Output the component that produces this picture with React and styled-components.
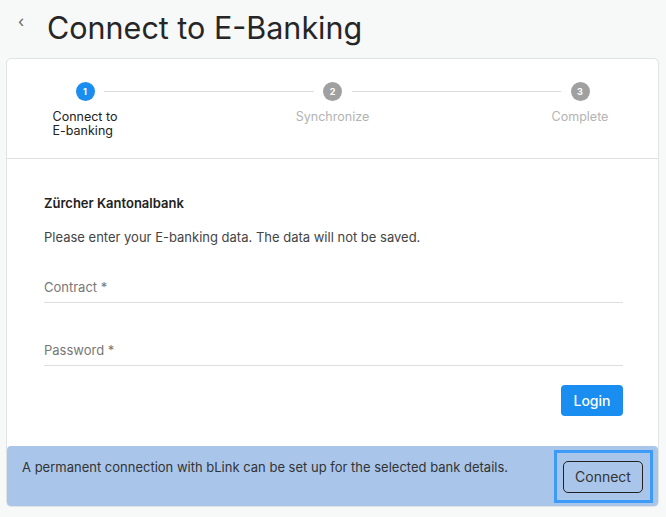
import React from 'react'
import styled, { createGlobalStyle } from 'styled-components'

const GlobalStyle = createGlobalStyle`
    body {
        margin: 0;
        background: #f7f8f8;
        font-family: Inter, "Noto Sans", sans-serif;
        color: #222;
    }
`;

const Page = styled.div`
    width: 666px;
    height: 517px;
    overflow: hidden;
`;

const Header = styled.div`
    height: 58px;
    display: flex;
    align-items: center;
    padding: 0 0 3px 18px;
    box-sizing: border-box;
`;

const BackButton = styled.span`
    font-size: 16px;
    color: #666;
    width: 29px;
    margin-top: -13px;
`;

const Title = styled.h1`
    margin: 0;
    font-size: 30.5px;
    font-weight: 400;
    color: #262626;
`;

const Card = styled.div`
    margin: 0 7px 0 6px;
    background: #fff;
    border: 1px solid #e1e2e2;
    border-radius: 5px;
`;

const Stepper = styled.div`
    display: flex;
    padding: 23px 38px 0;
    height: 100px;
    box-sizing: border-box;
    border-bottom: 1px solid #e0e0e0;
`;

const Step = styled.div`
    width: 80px;
    display: flex;
    flex-direction: column;
    align-items: center;
`;

const Circle = styled.div`
    width: 19px;
    height: 19px;
    border-radius: 50%;
    background: ${p => (p.$active ? '#1a8df0' : '#a0a0a0')};
    color: #fff;
    font-size: 9px;
    font-weight: 700;
    display: flex;
    align-items: center;
    justify-content: center;
`;

const StepLabel = styled.div`
    margin-top: 9px;
    width: fit-content;
    white-space: nowrap;
    font-size: 12.5px;
    line-height: 13.5px;
    color: ${p => (p.$active ? '#222' : '#b3b3b3')};
`;

const Connector = styled.div`
    flex: 1;
    height: 1px;
    background: #dcdcdc;
    margin: 9px -21px 0;
`;

const Form = styled.div`
    padding: 36px 35px 0 37px;
`;

const BankName = styled.div`
    font-size: 13px;
    font-weight: 600;
    line-height: 16px;
    color: #222;
`;

const Hint = styled.div`
    margin-top: 18px;
    font-size: 13px;
    line-height: 16px;
    color: #444;
`;

const Field = styled.div`
    margin-top: ${p => (p.$first ? '34px' : '39px')};
    padding: 0 0 7px 0;
    border-bottom: 1px solid #dedede;
    font-size: 13px;
    line-height: 16px;
    color: #777;
`;

const Actions = styled.div`
    display: flex;
    justify-content: flex-end;
    margin-top: 19px;
`;

const PrimaryButton = styled.button`
    width: 62px;
    height: 31px;
    border: none;
    border-radius: 4px;
    background: #1a8df0;
    color: #fff;
    font-family: inherit;
    font-size: 14px;
    font-weight: 500;
`;

const Banner = styled.div`
    margin-top: 30px;
    height: 60px;
    background: #a9c6ea;
    border-radius: 4px;
    display: flex;
    align-items: center;
    justify-content: space-between;
    padding: 0 5px 0 15px;
`;

const BannerText = styled.div`
    align-self: flex-start;
    padding-top: 13px;
    font-size: 13px;
    line-height: 16px;
    color: #333;
`;

const FocusRing = styled.div`
    border: 3px solid #3b9bf7;
    padding: 8px 7px 7px 6px;
`;

const OutlineButton = styled.button`
    display: block;
    width: 80px;
    height: 32px;
    border: 1px solid #222;
    border-radius: 5px;
    background: transparent;
    color: #333;
    font-family: inherit;
    font-size: 14px;
`;

const steps = [
    { n: 1, lines: ['Connect to', 'E-banking'], active: true },
    { n: 2, lines: ['Synchronize'] },
    { n: 3, lines: ['Complete'] },
];

function App() {
    return (
        <Page>
            <GlobalStyle />
            <Header>
                <BackButton>‹</BackButton>
                <Title>Connect to E-Banking</Title>
            </Header>
            <Card>
                <Stepper>
                    {steps.map((s, i) => (
                        <React.Fragment key={s.n}>
                            {i > 0 && <Connector />}
                            <Step>
                                <Circle $active={s.active}>{s.n}</Circle>
                                <StepLabel $active={s.active}>
                                    {s.lines.map((l, j) => (
                                        <div key={j}>{l}</div>
                                    ))}
                                </StepLabel>
                            </Step>
                        </React.Fragment>
                    ))}
                </Stepper>
                <Form>
                    <BankName>Zürcher Kantonalbank</BankName>
                    <Hint>Please enter your E-banking data. The data will not be saved.</Hint>
                    <Field $first>Contract *</Field>
                    <Field>Password *</Field>
                    <Actions>
                        <PrimaryButton>Login</PrimaryButton>
                    </Actions>
                </Form>
                <Banner>
                    <BannerText>A permanent connection with bLink can be set up for the selected bank details.</BannerText>
                    <FocusRing>
                        <OutlineButton>Connect</OutlineButton>
                    </FocusRing>
                </Banner>
            </Card>
        </Page>
    )
}

export default App
